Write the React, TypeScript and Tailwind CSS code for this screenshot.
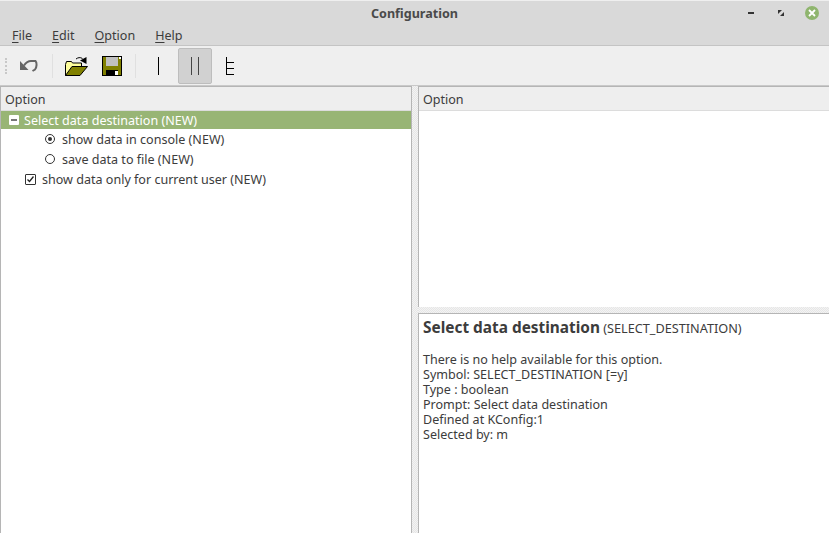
import React from "react";

const Menu = ({ first, rest }: { first: string; rest: string }) => (
  <span>
    <span className="underline underline-offset-2">{first}</span>
    {rest}
  </span>
);

const ToolBtn = ({ active, children, w }: { active?: boolean; children: React.ReactNode; w: string }) => (
  <div
    className={`flex items-center justify-center h-[36px] rounded-[2px] shrink-0 ${w} ${
      active ? "bg-[#d1d1d1] border border-[#bdbdbd]" : ""
    }`}
  >
    {children}
  </div>
);

const Header = () => (
  <div className="h-[24px] bg-[#eeeeee] border-b border-[#dcdcdc] pt-[1px] leading-[23px] pl-[4px] text-[#3c3c3c] shrink-0">
    Option
  </div>
);

const Label = ({ children }: { children: React.ReactNode }) => (
  <span className="pt-[2px] leading-[16px]">{children}</span>
);

const Splitter = ({ className }: { className: string }) => (
  <div
    className={`shrink-0 bg-[repeating-conic-gradient(#e6e6e6_0_25%,#f3f3f3_0_50%)] bg-[length:2px_2px] ${className}`}
  />
);

export default function App() {
  return (
    <div className="w-[829px] h-[533px] overflow-hidden flex flex-col bg-[#efefef] text-[#3c3c3c] text-[12.55px] font-['Noto_Sans',sans-serif]">
      {/* window title */}
      <div className="bg-[#d9d9d9] h-[46px] shrink-0 border-b border-[#c4c4c4] flex flex-col">
        <div className="h-[26px] relative flex items-center justify-center border-t border-[#efefef]">
          <span className="font-bold text-[12.6px] text-[#4a4a4a] pt-[1px]">Configuration</span>
          <div className="absolute right-[10px] top-[5px] flex items-center">
            <div className="w-[6px] h-[2px] bg-[#333] mr-[24px]" />
            <svg width="6" height="6" viewBox="0 0 6 6" className="mr-[21px]">
              <path d="M0 0h4L0 4zM6 6H2l4-4z" fill="#333" />
            </svg>
            <div className="w-[14px] h-[14px] rounded-full bg-[#8fb56e] flex items-center justify-center">
              <svg width="8" height="8" viewBox="0 0 8 8">
                <path d="M1 1l6 6M7 1l-6 6" stroke="#fff" strokeWidth="1.8" />
              </svg>
            </div>
          </div>
        </div>
        <div className="flex items-center gap-[20px] pl-[12px] h-[19px] pt-[1px]">
          <Menu first="F" rest="ile" />
          <Menu first="E" rest="dit" />
          <Menu first="O" rest="ption" />
          <Menu first="H" rest="elp" />
        </div>
      </div>

      {/* toolbar */}
      <div className="h-[40px] shrink-0 flex items-center pl-[5px] bg-[#efefef] border-b border-[#c9c9c9]">
        <div className="w-[2px] h-[16px] mr-[7px] border-l-2 border-dotted border-[#c8c8c8]" />
        <ToolBtn w="w-[30px]">
          <svg width="20" height="14" viewBox="0 0 20 14">
            <path d="M1 2v9h8.5z" fill="#666" />
            <path
              d="M5 6.5C7 3.5 9 2 12 2h4.5c1.5 1.5 1.5 6-.5 8.5l-2.5 1.5"
              fill="none"
              stroke="#666"
              strokeWidth="2"
            />
          </svg>
        </ToolBtn>
        <div className="w-px h-[24px] bg-[#e0e0e0] ml-[8px] mr-[8px]" />
        <ToolBtn w="w-[30px]">
          <svg width="23" height="21" viewBox="0 0 23 21">
            <path d="M0.5 9.5l1-3h5l1 1.5h9v3L6 20.5H0.5z" fill="#fdfd9c" stroke="#000" />
            <path d="M0.5 20.5L7 11.5h15.5L15 20.5z" fill="#808000" stroke="#000" />
            <path d="M11 4C13 2.5 15 2 17.5 3.5" fill="none" stroke="#000" />
            <path d="M15 5.5L21.5 2v7z" fill="#000" />
          </svg>
        </ToolBtn>
        <ToolBtn w="w-[42px]">
          <svg width="20" height="20" viewBox="0 0 20 20">
            <rect x="0.5" y="0.5" width="19" height="19" fill="#808000" stroke="#000" />
            <rect x="4" y="1" width="12" height="9" fill="#c0c0c0" />
            <rect x="17" y="1" width="2" height="2" fill="#fff" />
            <rect x="4" y="14" width="12" height="5" fill="#000" />
            <rect x="13" y="15" width="3" height="4" fill="#fff" />
          </svg>
        </ToolBtn>
        <div className="w-px h-[24px] bg-[#e0e0e0] ml-[2px] mr-[8px]" />
        <ToolBtn w="w-[29px]">
          <div className="w-px h-[18px] bg-black" />
        </ToolBtn>
        <div className="w-[5px] shrink-0" />
        <ToolBtn active w="w-[34px]">
          <div className="flex gap-[6px]">
            <div className="w-px h-[18px] bg-[#444]" />
            <div className="w-px h-[18px] bg-[#444]" />
          </div>
        </ToolBtn>
        <ToolBtn w="w-[36px]">
          <svg width="9" height="18" viewBox="0 0 9 18">
            <path d="M0.5 0v18M0.5 5.5H8M0.5 11.5H8M0.5 17.5H8" fill="none" stroke="#000" />
          </svg>
        </ToolBtn>
      </div>

      {/* panes */}
      <div className="flex-1 flex min-h-0">
        <div className="w-[412px] shrink-0 border-t border-l border-r border-[#b5b5b5] bg-white flex flex-col">
          <Header />
          <div className="h-[18px] bg-[#98b575] text-white flex items-center pl-[8px]">
            <div className="w-[10px] h-[10px] bg-white rounded-[1px] flex items-center justify-center mr-[5px]">
              <div className="w-[6px] h-[2px] bg-[#777]" />
            </div>
            <Label>Select data destination (NEW)</Label>
          </div>
          <div className="h-[20px] flex items-center pl-[44px]">
            <div className="w-[10px] h-[10px] rounded-full border border-[#333] flex items-center justify-center mr-[7px]">
              <div className="w-[4px] h-[4px] rounded-full bg-[#333]" />
            </div>
            <Label>show data in console (NEW)</Label>
          </div>
          <div className="h-[20px] flex items-center pl-[44px]">
            <div className="w-[10px] h-[10px] rounded-full border border-[#333] mr-[7px]" />
            <Label>save data to file (NEW)</Label>
          </div>
          <div className="h-[20px] flex items-center pl-[24px]">
            <div className="w-[11px] h-[11px] border border-[#333] rounded-[1px] flex items-center justify-center mr-[6px]">
              <svg width="7" height="7" viewBox="0 0 7 7">
                <path d="M0.5 3.5l2 2 4-5" fill="none" stroke="#222" strokeWidth="1.3" />
              </svg>
            </div>
            <Label>show data only for current user (NEW)</Label>
          </div>
        </div>

        <Splitter className="w-[6px]" />

        <div className="flex-1 flex flex-col min-w-0">
          <div className="h-[221px] shrink-0 border-t border-l border-[#b5b5b5] bg-white flex flex-col">
            <Header />
          </div>
          <Splitter className="h-[6px]" />
          <div className="flex-1 border-t border-l border-[#b5b5b5] bg-white pl-[4px] pt-[4px] leading-[15px]">
            <div className="leading-[20px] mb-[13px]">
              <span className="font-bold text-[15.4px]">Select data destination</span>{" "}
              <span className="text-[12.7px]">(SELECT_DESTINATION)</span>
            </div>
            <div>There is no help available for this option.</div>
            <div>Symbol: SELECT_DESTINATION [=y]</div>
            <div>Type : boolean</div>
            <div>Prompt: Select data destination</div>
            <div>Defined at KConfig:1</div>
            <div>Selected by: m</div>
          </div>
        </div>
      </div>
    </div>
  );
}
